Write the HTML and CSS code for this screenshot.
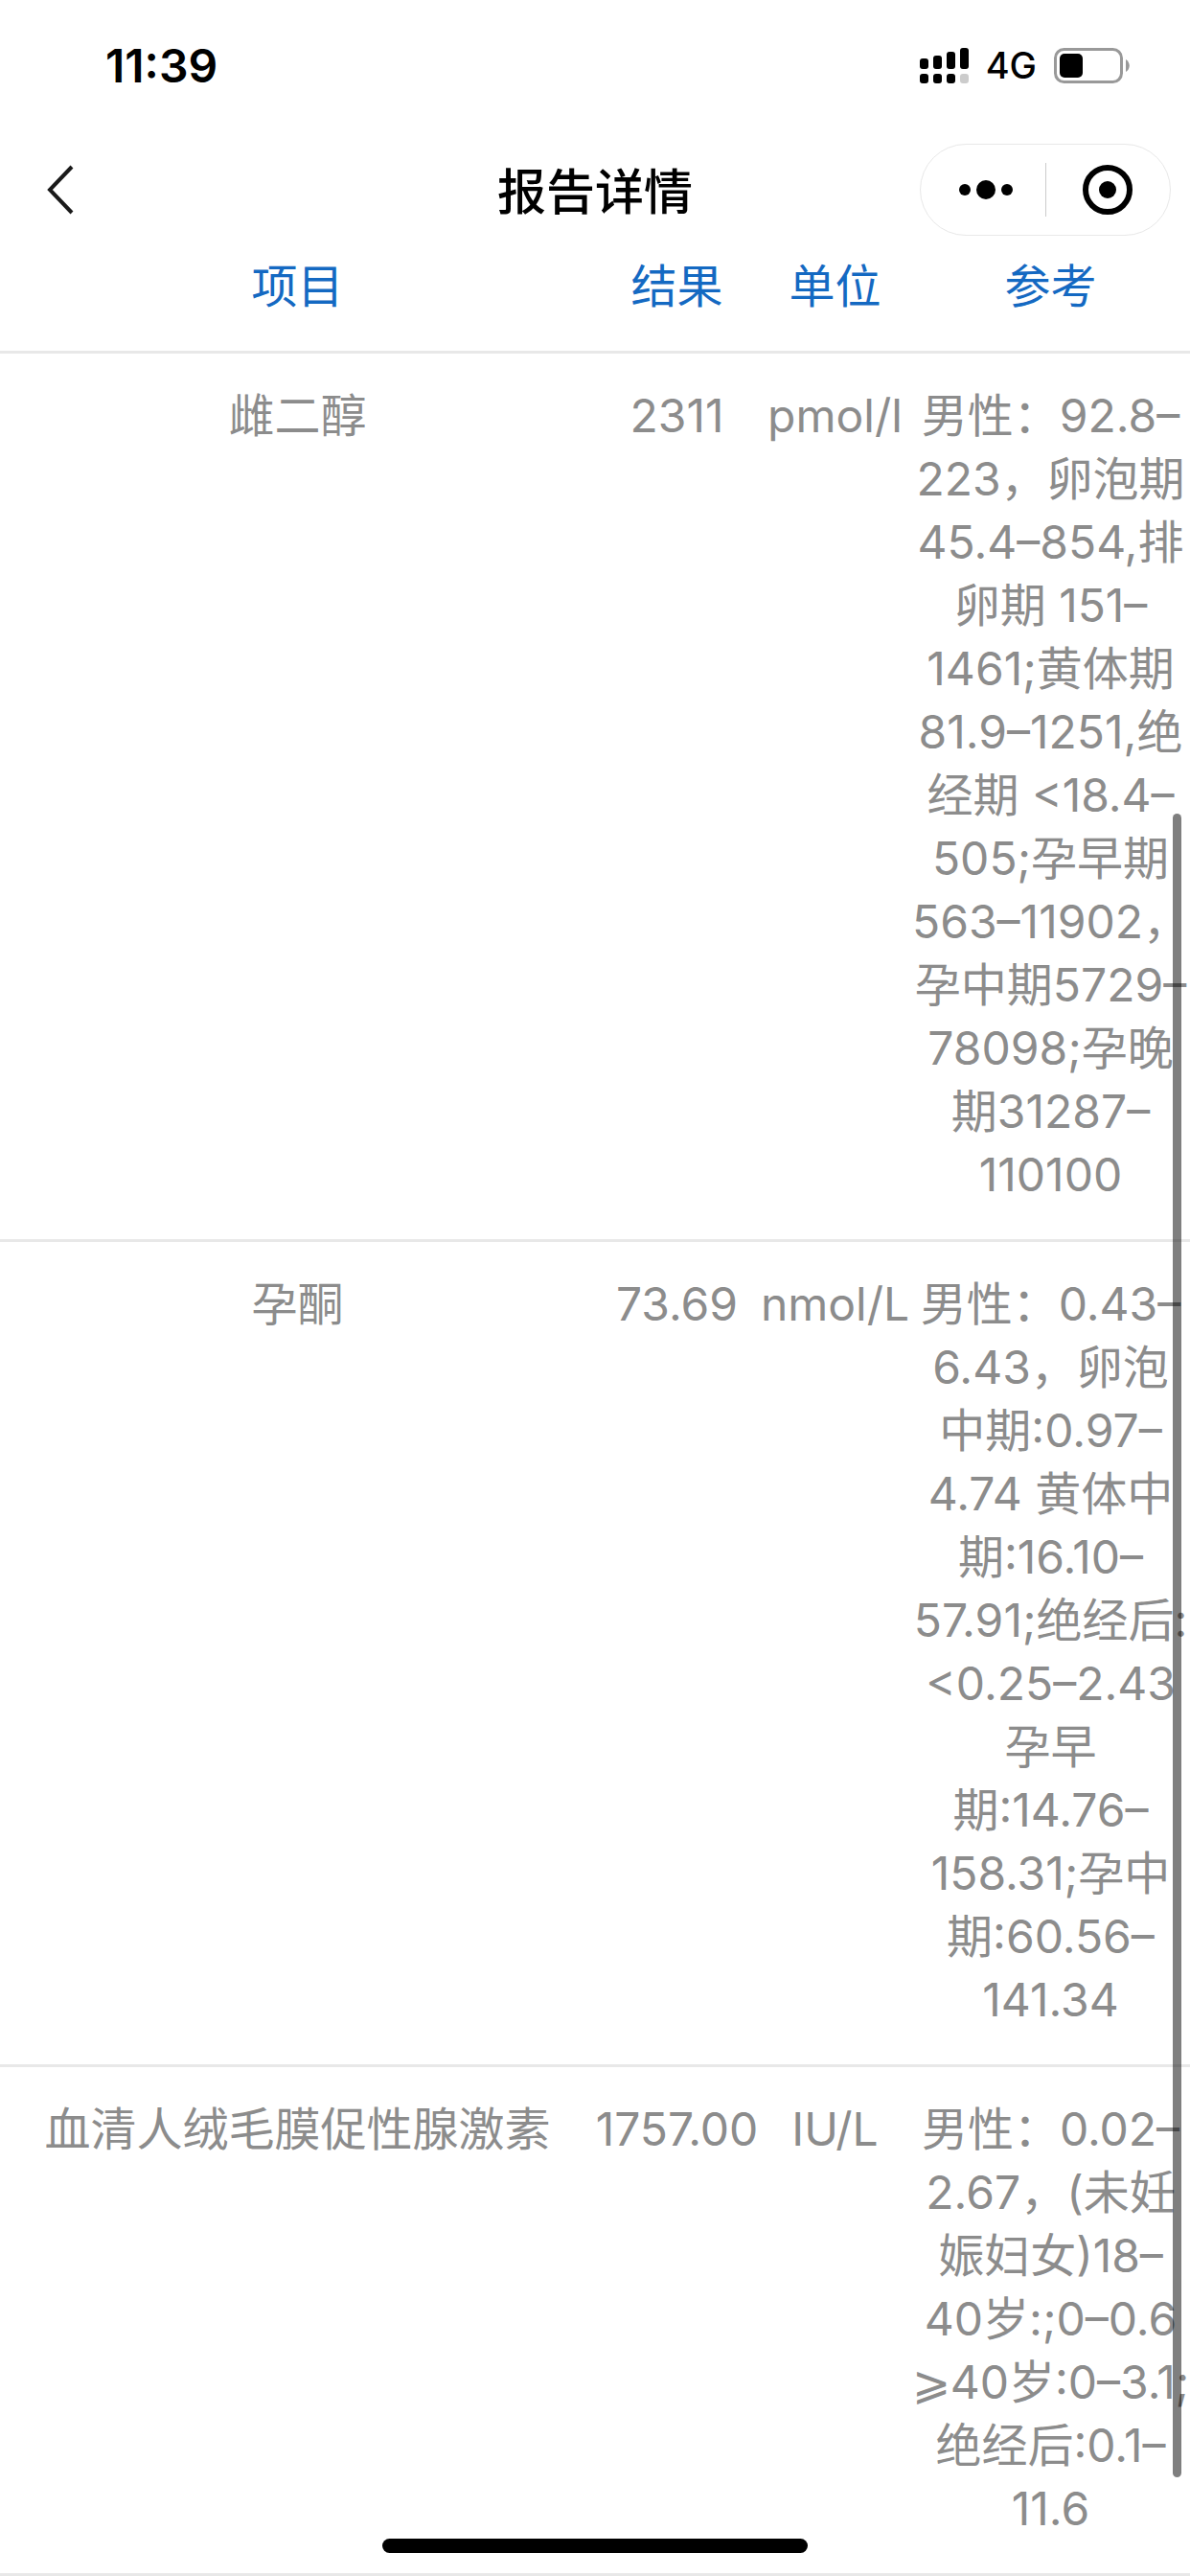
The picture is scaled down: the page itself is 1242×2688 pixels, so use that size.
FILE: index.html
```html
<!DOCTYPE html>
<html lang="zh-CN">
<head>
    <meta charset="utf-8">
    <meta name="viewport" content="width=device-width, initial-scale=1">
    <title>报告详情</title>
    <link rel="stylesheet" href="styles.css">
</head>
<body>
    <div class="status-bar">
        <span class="time">11:39</span>
        <div class="status-icons">
            <svg class="signal" width="51" height="37" viewBox="0 0 51 37">
                <rect x="0" y="11" width="9" height="11" rx="3"/>
                <rect x="14" y="8" width="9" height="14" rx="3"/>
                <rect x="28" y="4" width="9" height="18" rx="3"/>
                <rect x="42" y="0" width="9" height="22" rx="3"/>
                <rect x="0" y="27" width="9" height="10" rx="3"/>
                <rect x="14" y="27" width="9" height="10" rx="3"/>
                <rect x="28" y="27" width="9" height="10" rx="3"/>
                <rect x="42" y="27" width="9" height="10" rx="3" fill="#ccc"/>
            </svg>
            <span class="network">4G</span>
            <svg class="battery" width="79" height="37" viewBox="0 0 79 37">
                <rect x="1.5" y="1.5" width="69" height="34" rx="9" fill="none" stroke="#999" stroke-width="3"/>
                <rect x="6" y="6" width="24" height="25" rx="5"/>
                <path d="M75 12c5 3 5 10 0 13z" fill="#999"/>
            </svg>
        </div>
    </div>

    <div class="nav-bar">
        <button class="back" aria-label="返回">
            <svg width="30" height="52" viewBox="0 0 30 52">
                <path d="M27 2L4 26l23 24" fill="none" stroke="#1a1a1a" stroke-width="4"/>
            </svg>
        </button>
        <h1>报告详情</h1>
        <div class="capsule">
            <button class="more" aria-label="更多">
                <svg width="58" height="20" viewBox="0 0 58 20">
                    <circle cx="7" cy="10" r="6"/>
                    <circle cx="29" cy="10" r="10"/>
                    <circle cx="51" cy="10" r="6"/>
                </svg>
            </button>
            <span class="divider"></span>
            <button aria-label="关闭">
                <svg width="52" height="52" viewBox="0 0 52 52">
                    <circle cx="26" cy="26" r="23" fill="none" stroke="#000" stroke-width="6"/>
                    <circle cx="26" cy="26" r="9"/>
                </svg>
            </button>
        </div>
    </div>

    <table class="report">
        <thead>
            <tr>
                <th class="col-name">项目</th>
                <th class="col-result">结果</th>
                <th class="col-unit">单位</th>
                <th class="col-range">参考</th>
            </tr>
        </thead>
        <tbody>
            <tr>
                <td>雌二醇</td>
                <td>2311</td>
                <td>pmol/l</td>
                <td>男性&#xFF1A;92.8–<br>223&#xFF0C;卵泡期<br>45.4–854,排<br>卵期 151–<br>1461;黄体期<br>81.9–1251,绝<br>经期 &lt;18.4–<br>505;孕早期<br>563–11902&#xFF0C;<br>孕中期5729–<br>78098;孕晚<br>期31287–<br>110100</td>
            </tr>
            <tr>
                <td>孕酮</td>
                <td>73.69</td>
                <td>nmol/L</td>
                <td>男性&#xFF1A;0.43–<br>6.43&#xFF0C;卵泡<br>中期:0.97–<br>4.74 黄体中<br>期:16.10–<br>57.91;绝经后:<br>&lt;0.25–2.43<br>孕早<br>期:14.76–<br>158.31;孕中<br>期:60.56–<br>141.34</td>
            </tr>
            <tr>
                <td>血清人绒毛膜促性腺激素</td>
                <td>1757.00</td>
                <td>IU/L</td>
                <td>男性&#xFF1A;0.02–<br>2.67&#xFF0C;(未妊<br>娠妇女)18–<br>40岁:;0–0.6<br>⩾40岁:0–3.1;<br>绝经后:0.1–<br>11.6</td>
            </tr>
        </tbody>
    </table>

    <div class="scrollbar"></div>
    <div class="home-indicator"></div>
</body>
</html>
```
FILE: styles.css
```css
body {
    margin: 0;
    background: #fff;
    color: #000;
    font-family: Inter, "Noto Sans CJK SC", sans-serif;
    overflow-x: hidden;
}

button {
    display: flex;
    align-items: center;
    justify-content: center;
    padding: 0;
    border: none;
    background: none;
}

svg {
    display: block;
}

.status-bar {
    display: flex;
    justify-content: space-between;
    align-items: center;
    height: 136px;
    padding: 0 63px 0 110px;
}

.time {
    font-size: 48px;
    font-weight: 600;
}

.status-icons {
    display: flex;
    align-items: center;
    gap: 18px;
}

.network {
    font-size: 38px;
    font-weight: 500;
}

.nav-bar {
    display: grid;
    grid-template-columns: 1fr auto 1fr;
    align-items: center;
    height: 124px;
    padding: 0 20px 4px 48px;
}

.nav-bar h1 {
    margin: 0;
    padding: 6px 28px 0 0;
    font-size: 51px;
    font-weight: 500;
    line-height: 66px;
}

.back {
    justify-self: start;
}

.capsule {
    justify-self: end;
    display: flex;
    align-items: center;
    width: 260px;
    height: 94px;
    border: 1px solid #e8e8e8;
    border-radius: 48px;
}

.capsule button {
    width: 50%;
    height: 100%;
}

.capsule .more {
    padding-left: 6px;
    box-sizing: border-box;
}

.divider {
    width: 1px;
    height: 56px;
    background: #ccc;
}

.report {
    width: 100%;
    table-layout: fixed;
    border-spacing: 0;
    font-size: 48px;
    font-weight: 400;
    line-height: 66px;
    text-align: center;
    white-space: nowrap;
}

.report th {
    padding: 2px 0 34px;
    border-bottom: 3px solid #e8e8e8;
    color: #1469c2;
    font-weight: 400;
}

.report td {
    padding: 32px 0 34px;
    border-bottom: 3px solid #e8e8e8;
    color: #8c8c8c;
    vertical-align: top;
}

.report .col-result {
    width: 171px;
}

.report .col-unit {
    width: 159px;
}

.report .col-range {
    width: 291px;
}

.scrollbar {
    position: fixed;
    top: 849px;
    right: 9px;
    bottom: 103px;
    width: 9px;
    border-radius: 5px;
    background: rgba(0, 0, 0, 0.5);
}

.home-indicator {
    position: fixed;
    left: 50%;
    bottom: 24px;
    width: 444px;
    height: 15px;
    margin-left: -222px;
    border-radius: 8px;
    background: #000;
}
```
